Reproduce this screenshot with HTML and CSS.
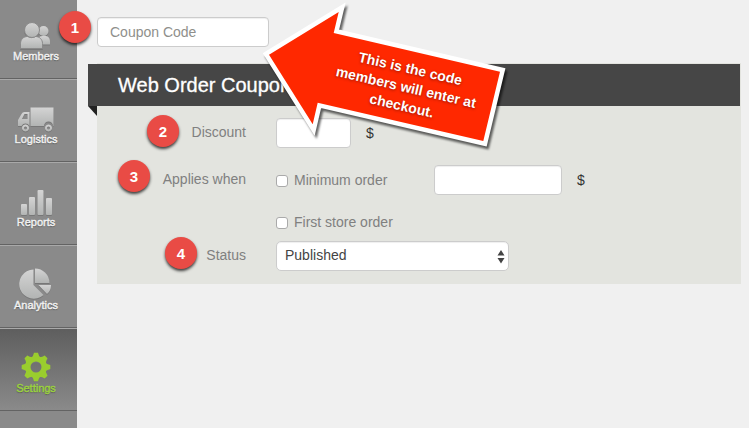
FILE: index.html
```html
<!DOCTYPE html>
<html lang="en">
<head>
<meta charset="utf-8">
<meta name="viewport" content="width=device-width, initial-scale=1">
<title>Web Order Coupon</title>
<link rel="stylesheet" href="styles.css">
</head>
<body>
<div class="app">
  <svg class="defs" width="0" height="0" aria-hidden="true">
    <defs>
      <linearGradient id="silver" x1="0" y1="0" x2="0" y2="1">
        <stop offset="0" stop-color="#d4d4d4"/>
        <stop offset="1" stop-color="#b2b4b3"/>
      </linearGradient>
    </defs>
  </svg>
  <nav class="sidebar">
    <a class="item" href="#">
      <svg class="icon" viewBox="-2 -3 34 30" aria-hidden="true">
        <g fill="url(#silver)">
          <circle cx="22.500" cy="8" r="5"/>
          <path d="M19 13.500c6-2 10 0 10 5v3h-8c0-3-1-5-3-7z"/>
        </g>
        <g fill="url(#silver)" stroke="#8a8a8a">
          <path d="M-.500 25.500v-5c0-4 3-7 7-7 2.500 1.500 5.500 1.500 8 0 4 0 7 3 7 7v5z"/>
          <circle cx="11" cy="7" r="7.500"/>
        </g>
      </svg>
      <span>Members</span>
    </a>
    <a class="item" href="#">
      <svg class="icon wide" viewBox="0 -2 38 30" aria-hidden="true">
        <g fill="url(#silver)">
          <path d="M13.500 2.500H36.500V21H36a4.500 4.500 0 0 0-9 0H13.500z"/>
          <path d="M12.500 7v14a4.500 4.500 0 0 0-8 0H1v-6l3.500-6q1-2 3-2zM10.500 9H7.500L5 14h5.500z" fill-rule="evenodd"/>
          <path d="M8.500 19.500a3.500 3.500 0 1 0 .01 0zM8.500 21.500a1.500 1.500 0 1 1-.01 0zM31.500 19.500a3.500 3.500 0 1 0 .01 0zM31.500 21.500a1.500 1.500 0 1 1-.01 0z" fill-rule="evenodd"/>
        </g>
      </svg>
      <span>Logistics</span>
    </a>
    <a class="item" href="#">
      <svg class="icon" viewBox="-1 -2 34 30" aria-hidden="true">
        <g fill="url(#silver)">
          <rect x="1" y="16" width="6" height="11" rx="1"/>
          <rect x="9" y="9" width="6" height="18" rx="1"/>
          <rect x="17.500" y="2" width="6" height="25" rx="1"/>
          <rect x="26" y="10" width="6" height="17" rx="1"/>
        </g>
      </svg>
      <span>Reports</span>
    </a>
    <a class="item" href="#">
      <svg class="icon" viewBox="0 -1 34 30" aria-hidden="true">
        <g fill="url(#silver)">
          <path d="M14.500 -.500V15L24.500 25A14.600 14.600 0 1 1 14.500 -.500z"/>
          <path d="M16 -1.500A14.500 14.500 0 0 1 30.500 13H16z"/>
          <path d="M19.500 15h12.500q0 6-4 9z"/>
        </g>
      </svg>
      <span>Analytics</span>
    </a>
    <a class="item active" href="#">
      <svg class="icon" viewBox="-17 -15 34 30" aria-hidden="true">
        <g fill="none" stroke="#9acd2e">
          <circle r="8" stroke-width="5"/>
          <g fill="#9acd2e" stroke="none">
            <path id="tooth" d="M-5.500-8.500Q-2.500-10.500-2-14.300h4Q2.500-10.500 5.500-8.500z"/>
            <use href="#tooth" transform="rotate(45)"/>
            <use href="#tooth" transform="rotate(90)"/>
            <use href="#tooth" transform="rotate(135)"/>
            <use href="#tooth" transform="rotate(180)"/>
            <use href="#tooth" transform="rotate(225)"/>
            <use href="#tooth" transform="rotate(270)"/>
            <use href="#tooth" transform="rotate(315)"/>
          </g>
        </g>
      </svg>
      <span>Settings</span>
    </a>
  </nav>
  <main class="main">
    <input class="field code" type="text" placeholder="Coupon Code" aria-label="Coupon Code">
    <section class="panel">
      <h1 class="title">Web Order Coupon</h1>
      <form class="form">
        <label class="label" for="discount">Discount</label>
        <div class="controls">
          <input class="field short" id="discount" type="text">
          <span class="unit">$</span>
        </div>
        <span class="label">Applies when</span>
        <div class="controls">
          <label class="check"><input type="checkbox"> Minimum order</label>
          <input class="field amount" type="text" aria-label="Minimum order amount">
          <span class="unit">$</span>
        </div>
        <div class="controls second">
          <label class="check"><input type="checkbox"> First store order</label>
        </div>
        <label class="label" for="status">Status</label>
        <div class="controls">
          <div class="select-box">
            <select class="field select" id="status"><option>Published</option></select>
            <svg class="arrows" viewBox="0 0 8 14" aria-hidden="true"><path d="M4 0l3.500 5.500h-7zM4 13.500L.5 8h7z" fill="#444"/></svg>
          </div>
        </div>
      </form>
    </section>
  </main>
  <span class="badge b1">1</span>
  <span class="badge b2">2</span>
  <span class="badge b3">3</span>
  <span class="badge b4">4</span>
  <div class="callout">
    <svg class="callout-shape" viewBox="0 0 260 155" aria-hidden="true">
      <path d="M14 54.700L83.700 12 78.700 33 245 71.700 228.300 141 62.700 102.700 57.700 124.300z" fill="#ff2800" stroke="#fff" stroke-width="9" stroke-miterlimit="8" paint-order="stroke"/>
    </svg>
    <p class="callout-text">This is the code<br>members will enter at<br>checkout.</p>
  </div>
</div>
</body>
</html>
```
FILE: styles.css
```css
* { box-sizing: border-box; }
body {
  margin: 0;
  background: #f0f0f0;
  font: 14px/20px "Liberation Sans", Arial, sans-serif;
  color: #444;
}
.app { position: relative; display: flex; min-height: 100vh; overflow: hidden; }
.defs { position: absolute; }

.sidebar { flex: none; width: 77px; background: #8a8a8a; }
.item {
  display: flex;
  flex-direction: column;
  align-items: center;
  height: 83px;
  padding: 23px 5px 0 0;
  border-top: 1px solid #a9a9a9;
  border-bottom: 1px solid #636363;
  background: #8a8a8a;
  color: #f2f2f2;
  font-size: 11px;
  line-height: 12px;
  text-decoration: none;
  text-shadow: 0 1px 1px #555;
  -webkit-text-stroke: 0.4px currentColor;
}
.item:first-child { margin-top: -4px; }
.icon { width: 34px; height: 30px; overflow: visible; filter: drop-shadow(0 1px 0 #777); }
.icon.wide { width: 38px; }
.item.active { background: linear-gradient(#5e5e5e, #8a8a8a); color: #9bd23c; }

.main { flex: 1; min-width: 0; padding: 17px 8px 0 20px; }
.field {
  height: 30px;
  margin: 0;
  padding: 4px 12px;
  border: 1px solid #ccc;
  border-radius: 4px;
  background: #fff;
  box-shadow: inset 0 1px 1px #0001;
  color: #444;
  font: inherit;
}
.field::placeholder { color: #8f8f8b; opacity: 1; }
.code { display: block; width: 172px; }

.panel { margin-top: 16px; padding: 1px 1px 0 0; background: #e3e4df; }
.title {
  position: relative;
  margin: 0 0 0 -9px;
  padding: 0 30px;
  background: #464646;
  color: #fff;
  font-size: 20px;
  font-weight: 400;
  line-height: 42px;
  -webkit-text-stroke: 0.3px currentColor;
}
.title::after {
  content: "";
  position: absolute;
  top: 100%;
  left: 0;
  border-top: 10px solid #222;
  border-left: 9px solid transparent;
}
.form {
  display: grid;
  grid-template-columns: 149px 1fr;
  column-gap: 30px;
  padding: 12px 0 13px;
}
.label { color: #808080; line-height: 28px; text-align: right; }
.controls { display: flex; align-items: center; height: 30px; margin-bottom: 17px; }
.controls.second { grid-column: 2; height: 20px; margin-bottom: 9px; }
.controls:last-child { margin-bottom: 0; }
.short { width: 75px; }
.amount { width: 128px; }
.unit { margin-left: 15px; color: #333; }
.check { display: flex; align-items: center; width: 158px; color: #808080; }
.check input {
  appearance: none;
  width: 12px;
  height: 12px;
  margin: 1px 6px 0 0;
  border: 1px solid #aaa;
  border-radius: 3px;
  background: #fff;
}
.check input:checked { background: #666; }
.select-box { position: relative; width: 233px; }
.select { display: block; width: 100%; padding: 0 8px 3px; appearance: none; border-radius: 5px; }
.arrows { position: absolute; top: 9px; right: 4px; width: 8px; height: 14px; pointer-events: none; }

.badge {
  position: absolute;
  width: 32px;
  height: 32px;
  border-radius: 50%;
  background: #e94b45;
  box-shadow: 0 2px 3px #000b;
  color: #fff;
  font-size: 15px;
  font-weight: 700;
  line-height: 34px;
  text-align: center;
}
.b1 { left: 59px; top: 11px; }
.b2 { left: 147px; top: 115px; }
.b3 { left: 118px; top: 160px; }
.b4 { left: 165px; top: 237px; }

.callout { position: absolute; left: 255px; top: 0; width: 260px; height: 155px; pointer-events: none; }
.callout-shape { display: block; width: 100%; overflow: visible; filter: drop-shadow(2px 3px 1px #0009); }
.callout-text {
  position: absolute;
  left: 71px;
  top: 59px;
  width: 160px;
  margin: 0;
  color: #fff;
  font-size: 14px;
  font-weight: 700;
  line-height: 19px;
  text-align: center;
  text-shadow: 0 1px 3px #0006;
  transform: rotate(13deg);
}
```
